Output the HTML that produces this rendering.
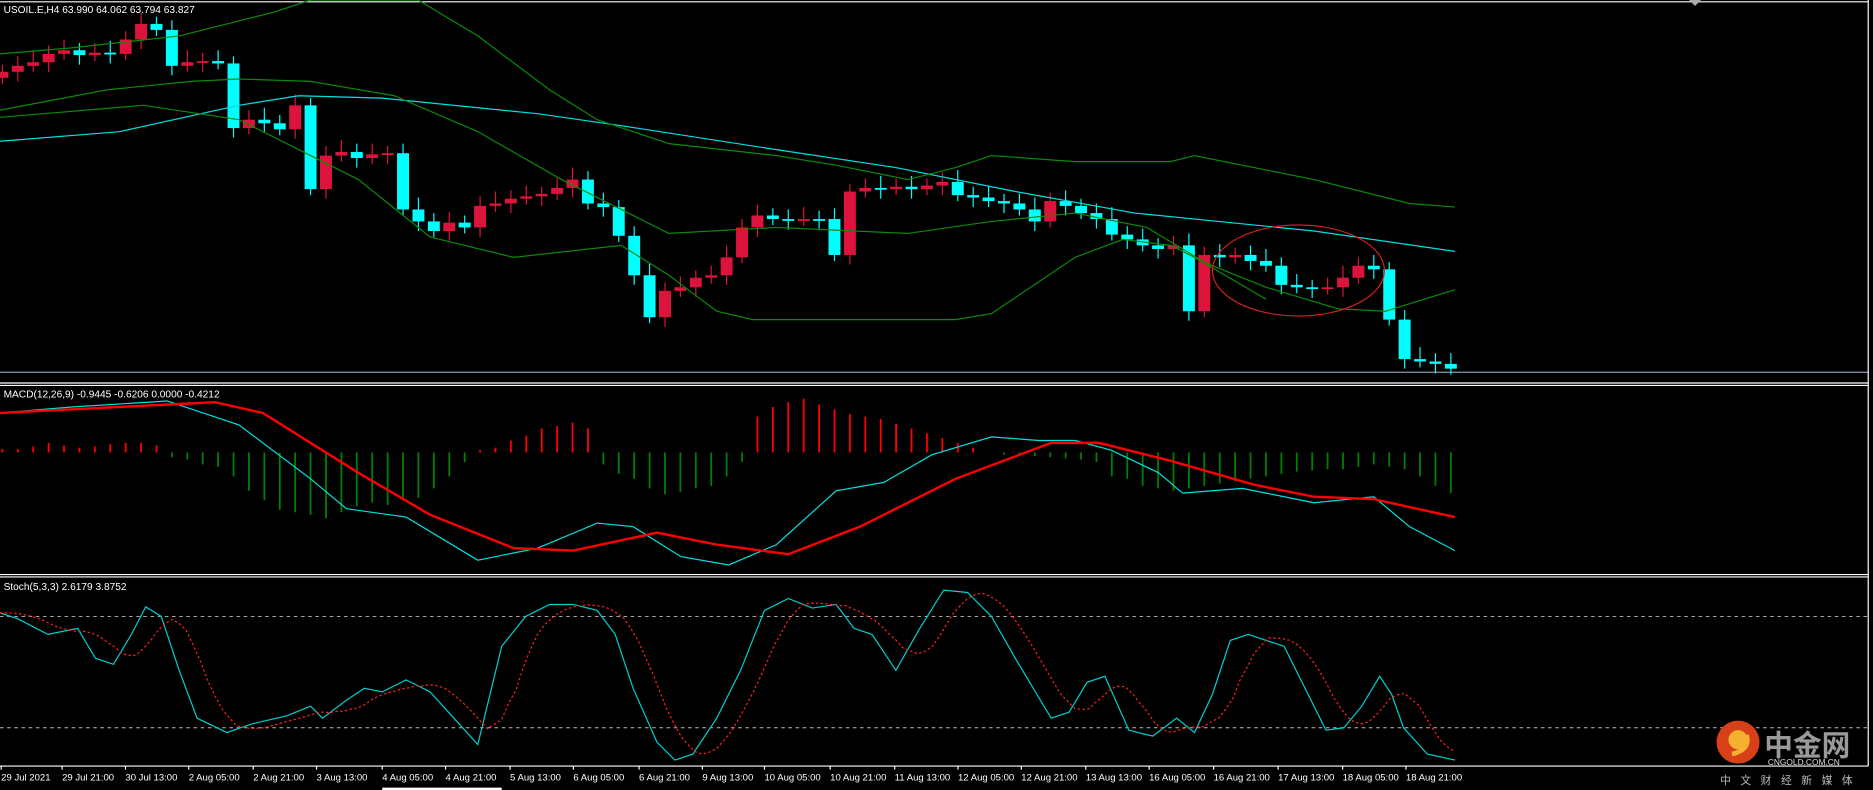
<!DOCTYPE html>
<html><head><meta charset="utf-8"><style>
html,body{margin:0;padding:0;background:#000;width:1873px;height:790px;overflow:hidden}
svg{display:block}
text{font-family:"Liberation Sans","Noto Sans CJK SC",sans-serif}
</style></head><body>
<svg id="s" width="1873" height="790" viewBox="0 0 1568 660" preserveAspectRatio="none" xmlns="http://www.w3.org/2000/svg">
<rect width="1568" height="660" fill="#000"/>
<line x1="0" y1="1.5" x2="1564" y2="1.5" stroke="#fff" stroke-width="1"/>
<line x1="0" y1="311" x2="1564" y2="311" stroke="#8a96a8" stroke-width="1"/>
<line x1="0" y1="320" x2="1564" y2="320" stroke="#fff" stroke-width="1"/>
<line x1="0" y1="322" x2="1564" y2="322" stroke="#fff" stroke-width="1"/>
<line x1="0" y1="480" x2="1564" y2="480" stroke="#fff" stroke-width="1"/>
<line x1="0" y1="482" x2="1564" y2="482" stroke="#fff" stroke-width="1"/>
<line x1="0" y1="640" x2="1564" y2="640" stroke="#fff" stroke-width="1"/>
<line x1="1564" y1="0" x2="1564" y2="640" stroke="#fff" stroke-width="1"/>
<line x1="320" y1="659" x2="420" y2="659" stroke="#fff" stroke-width="2"/>
<polygon points="1414,0 1424,0 1419,5" fill="#aaa"/>
<line x1="0" y1="515" x2="1564" y2="515" stroke="#bbb" stroke-width="0.8" stroke-dasharray="3,3"/>
<line x1="0" y1="608" x2="1564" y2="608" stroke="#bbb" stroke-width="0.8" stroke-dasharray="3,3"/>
<g id="g"></g>
<ellipse cx="1087" cy="226" rx="72" ry="38" fill="none" stroke="#d02020" stroke-width="1"/>
<text x="3" y="11" fill="#fff" font-size="8.5">USOIL.E,H4  63.990 64.062 63.794 63.827</text>
<text x="3" y="332" fill="#fff" font-size="8.5">MACD(12,26,9) -0.9445 -0.6206 0.0000 -0.4212</text>
<text x="3" y="493" fill="#fff" font-size="8.5">Stoch(5,3,3) 2.6179 3.8752</text>
<g id="t" fill="#fff" font-size="8"></g>
<circle cx="1455" cy="620" r="18" fill="#d8401a"/>
<circle cx="1455" cy="618" r="8" fill="#f5b030"/>
<path d="M1450,630 Q1466,626 1462,614" stroke="#f5b030" stroke-width="4" fill="none"/>
<text x="1477" y="631" fill="#9a9a9a" font-size="24" font-weight="bold">中金网</text>
<text x="1480" y="639" fill="#ddd" font-size="7">CNGOLD.COM.CN</text>
<text x="1440" y="655" fill="#bbb" font-size="9" letter-spacing="8">中文财经新媒体</text>
</svg>
<script>
const g=document.getElementById('g');let h='';
const X=i=>2+i*12.9;
function ip(pts,x){if(x<=pts[0][0])return pts[0][1];for(let k=0;k<pts.length-1;k++){if(x>=pts[k][0]&&x<=pts[k+1][0]){const t=(x-pts[k][0])/(pts[k+1][0]-pts[k][0]||1);return pts[k][1]+t*(pts[k+1][1]-pts[k][1]);}}return pts[pts.length-1][1];}
const key=[60,55,52,45,42,46,44,45,33,20,25,55,52,51,53,107,100,103,108,88,158,130,127,132,129,128,175,185,193,186,190,172,170,166,164,162,157,150,170,173,197,230,265,243,240,232,230,215,190,180,183,184,183,183,213,160,157,158,156,158,155,152,163,165,168,170,175,185,168,172,178,183,196,200,205,208,205,260,213,215,213,218,222,238,240,241,240,232,222,225,267,300,302,304,308];
let c=key;
for(let i=0;i<c.length;i++){const o=i?c[i-1]:65,cl=c[i];const up=cl<o;const col=up?'#dc143c':'#00ffff';const top=Math.min(o,cl),bot=Math.max(o,cl);const x=X(i);
h+=`<line x1="${x}" y1="${top-6-(i*7%5)}" x2="${x}" y2="${bot+5+(i*3%6)}" stroke="${col}" stroke-width="1"/>`;
h+=`<rect x="${x-5}" y="${top}" width="10" height="${Math.max(bot-top,1.5)}" fill="${col}"/>`;}
function pl(p,col,w,d){h+=`<polyline points="${p.map(q=>q.join(',')).join(' ')}" fill="none" stroke="${col}" stroke-width="${w}" ${d?'stroke-dasharray="'+d+'"':''}/>`;}
pl([[0,118],[100,110],[200,88],[250,80],[320,82],[450,95],[520,105],[650,125],[750,140],[850,160],[950,178],[1100,193],[1218,210]],'#00e0e0',1);
pl([[0,45],[60,40],[150,30],[230,10],[260,0],[350,0],[400,30],[460,75],[500,100],[560,120],[650,130],[700,138],[760,150],[800,140],[830,130],[900,135],[980,135],[1000,130],[1100,150],[1180,170],[1218,173]],'#0a8a0a',1);
pl([[0,92],[90,75],[160,68],[200,66],[260,68],[330,80],[400,110],[470,150],[520,175],[560,195],[650,190],[760,195],[830,185],[900,178],[960,190],[1010,220],[1060,240],[1120,258],[1160,260],[1218,242]],'#0a8a0a',1);
pl([[0,98],[120,88],[200,100],[300,150],[360,198],[430,215],[520,205],[560,230],[600,260],[630,267],[800,267],[830,262],[900,215],[940,200],[980,205],[1000,215],[1060,250]],'#0a8a0a',1);
const hv=[-3,-3,-5,-8,-6,-4,-5,-7,-8,-8,-6,4,6,10,12,20,32,40,48,50,52,55,50,45,42,44,40,38,30,20,8,-2,-4,-10,-14,-20,-22,-25,-20,10,18,22,30,35,33,30,28,20,8,-30,-38,-42,-45,-40,-36,-32,-30,-28,-24,-20,-16,-12,-8,-4,0,2,2,3,4,5,6,8,20,22,28,30,32,30,28,26,24,22,20,18,16,15,14,14,12,10,12,14,20,28,34];
for(let i=0;i<hv.length&&i<95;i++){const v=hv[i];const x=X(i);if(v<0)h+=`<line x1="${x}" y1="${378+v}" x2="${x}" y2="378" stroke="#ff0000" stroke-width="1.5"/>`;else h+=`<line x1="${x}" y1="378" x2="${x}" y2="${378+v}" stroke="#008000" stroke-width="1.5"/>`;}
pl([[0,345],[60,340],[140,335],[200,355],[260,400],[290,425],[340,432],[400,468],[450,458],[500,437],[530,440],[570,465],[610,472],[650,455],[700,410],[740,403],[780,380],[830,365],[870,368],[900,368],[930,376],[970,395],[990,412],[1040,408],[1100,420],[1150,415],[1180,440],[1218,460]],'#00e0e0',1);
pl([[0,345],[100,340],[180,336],[220,345],[300,395],[360,430],[430,458],[480,460],[550,445],[600,455],[660,463],[720,440],[800,400],[880,370],[920,370],[980,385],[1050,405],[1100,415],[1150,417],[1218,432]],'#ff0000',2);
const K=[[0,512],[15,517],[40,530],[65,525],[80,550],[95,555],[110,530],[122,507],[135,515],[150,560],[165,600],[190,612],[210,605],[240,598],[260,590],[270,600],[290,585],[305,575],[320,578],[340,568],[360,578],[380,600],[400,622],[420,540],[440,515],[460,505],[480,505],[500,510],[515,530],[530,575],[550,620],[565,635],[580,630],[600,600],[620,560],[640,510],[660,500],[680,508],[700,505],[715,525],[730,530],[750,560],[770,525],[790,493],[810,495],[830,515],[850,550],[865,575],[880,600],[895,595],[910,570],[925,565],[945,610],[965,615],[985,600],[1000,612],[1015,580],[1030,535],[1045,530],[1075,540],[1090,570],[1110,610],[1125,608],[1140,590],[1155,565],[1165,580],[1175,608],[1195,630],[1218,635]];
pl(K,'#00d0d0',1);
const D=[];for(let x=0;x<=1218;x+=6){D.push([x,(ip(K,x-8)+ip(K,x-20)+ip(K,x-32))/3]);}
pl(D,'#ff2020',1,'2,2');
g.innerHTML=h;
const labs=[[1,"29 Jul 2021"],[52,"29 Jul 21:00"],[105,"30 Jul 13:00"],[158,"2 Aug 05:00"],[212,"2 Aug 21:00"],[265,"3 Aug 13:00"],[320,"4 Aug 05:00"],[373,"4 Aug 21:00"],[427,"5 Aug 13:00"],[480,"6 Aug 05:00"],[535,"6 Aug 21:00"],[588,"9 Aug 13:00"],[640,"10 Aug 05:00"],[695,"10 Aug 21:00"],[749,"11 Aug 13:00"],[802,"12 Aug 05:00"],[855,"12 Aug 21:00"],[909,"13 Aug 13:00"],[962,"16 Aug 05:00"],[1016,"16 Aug 21:00"],[1070,"17 Aug 13:00"],[1124,"18 Aug 05:00"],[1177,"18 Aug 21:00"]];
let t='';labs.forEach(l=>{t+=`<text x="${l[0]}" y="652">${l[1]}</text><line x1="${l[0]}" y1="640" x2="${l[0]}" y2="643" stroke="#fff"/>`;});
document.getElementById('t').innerHTML=t;
</script>
</body></html>
